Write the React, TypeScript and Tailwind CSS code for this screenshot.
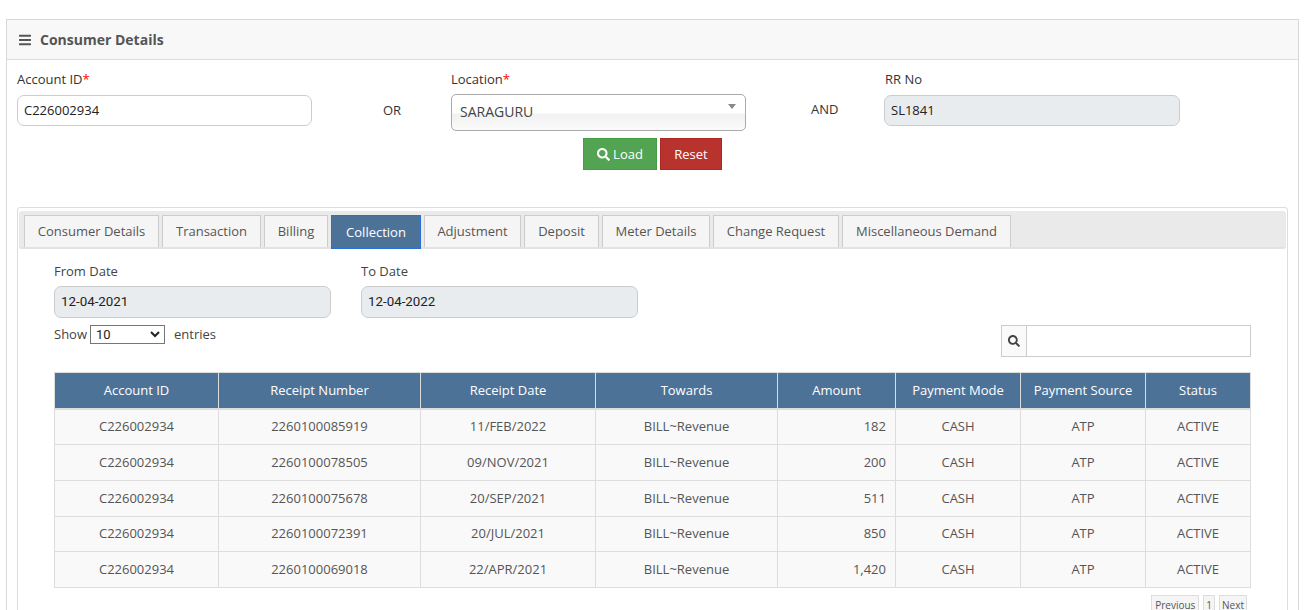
import React from 'react';
import { FaBars, FaSearch } from 'react-icons/fa';

const TABS = [
  { label: 'Consumer Details', width: 'w-[135px]' },
  { label: 'Transaction', width: 'w-[99px]' },
  { label: 'Billing', width: 'w-[64px]' },
  { label: 'Collection', width: 'w-[90px]', active: true },
  { label: 'Adjustment', width: 'w-[97px]' },
  { label: 'Deposit', width: 'w-[75px]' },
  { label: 'Meter Details', width: 'w-[108px]' },
  { label: 'Change Request', width: 'w-[126px]' },
  { label: 'Miscellaneous Demand', width: 'w-[169px]' },
];

const COLUMNS = [
  { label: 'Account ID', width: 'w-[164px]' },
  { label: 'Receipt Number', width: 'w-[202px]' },
  { label: 'Receipt Date', width: 'w-[175px]' },
  { label: 'Towards', width: 'w-[182px]' },
  { label: 'Amount', width: 'w-[118px]' },
  { label: 'Payment Mode', width: 'w-[125px]' },
  { label: 'Payment Source', width: 'w-[125px]' },
  { label: 'Status', width: 'w-[105px]' },
];

const ROWS = [
  { receipt: '2260100085919', date: '11/FEB/2022', amount: '182', h: 'h-[36px]' },
  { receipt: '2260100078505', date: '09/NOV/2021', amount: '200', h: 'h-[36px]' },
  { receipt: '2260100075678', date: '20/SEP/2021', amount: '511', h: 'h-[36px]' },
  { receipt: '2260100072391', date: '20/JUL/2021', amount: '850', h: 'h-[35px]' },
  { receipt: '2260100069018', date: '22/APR/2021', amount: '1,420', h: 'h-[36px]' },
];

const cell = 'border border-[#ddd] px-2 text-center font-normal';

export default function App() {
  return (
    <div className="h-[610px] overflow-hidden bg-white pt-[19px] pl-[6px] pr-[8px] font-['Open_Sans',sans-serif] text-[13px] text-[#333]">
      <div className="border border-[#d8d8d8]">
        {/* Panel header */}
        <div className="flex h-[40px] items-center gap-[9px] border-b border-[#ddd] bg-[#f8f8f8] pl-[12px]">
          <FaBars className="h-[14px] w-[12px] text-[#555]" />
          <span className="text-[14px] font-bold text-[#555]">Consumer Details</span>
        </div>

        {/* Search form */}
        <div className="flex h-[133px] pl-[10px] pt-[10px]">
          <div className="w-[295px]">
            <label className="block h-[25px] leading-[18px]">
              Account ID<span className="text-[#f00]">*</span>
            </label>
            <div className="flex h-[31px] items-center rounded-[7px] border border-[#ccc] pl-[6px] text-[#222]">
              C226002934
            </div>
          </div>
          <div className="w-[139px] pl-[71px] pt-[31px] leading-[18px]">OR</div>
          <div className="w-[295px]">
            <label className="block h-[24px] leading-[18px]">
              Location<span className="text-[#f00]">*</span>
            </label>
            <div className="relative flex h-[37px] items-center rounded-[5px] border border-[#aaa] bg-[linear-gradient(#fff_50%,#f1f1f1_56%,#fbfbfb)] pl-[8px] pb-[3px] text-[14px] text-[#444]">
              SARAGURU
              <span className="absolute right-[9px] top-[9px] border-x-[4px] border-t-[5px] border-x-transparent border-t-[#888]" />
            </div>
            <div className="mt-[7px] flex gap-[3px] pl-[132px]">
              <button className="flex h-[32px] w-[74px] items-center justify-center gap-[3px] border border-[#449d44] bg-[#52a452] pt-[1px] text-white">
                <FaSearch className="h-[13px] w-[13px]" />
                Load
              </button>
              <button className="h-[32px] w-[62px] border border-[#ac2925] bg-[#b9332e] pt-[1px] text-white">Reset</button>
            </div>
          </div>
          <div className="w-[138px] pl-[65px] pt-[30px] leading-[18px]">AND</div>
          <div className="w-[296px]">
            <label className="block h-[25px] pl-[1px] leading-[18px]">RR No</label>
            <div className="flex h-[31px] items-center rounded-[7px] border border-[#ccc] bg-[#e9ecef] pl-[6px] text-[#222]">
              SL1841
            </div>
          </div>
        </div>

        {/* Tabbed box */}
        <div className="mx-[10px] mt-[14px] h-[420px] rounded-[3px] border border-[#ddd] px-[1px] pt-[3px]">
          <div className="flex h-[38px] gap-[3px] rounded-[3px] border-b-[2px] border-[#e2e2e2] bg-[#eaeaea] pl-[5px] pt-[4px]">
            {TABS.map((tab) =>
              tab.active ? (
                <div
                  key={tab.label}
                  className={`flex h-[34px] items-center justify-center border border-[#2a6fd6] bg-[#4d7298] pt-[2px] text-white ${tab.width}`}
                >
                  {tab.label}
                </div>
              ) : (
                <div
                  key={tab.label}
                  className={`flex h-[32px] items-center justify-center border-x border-t border-[#ccc] bg-[#f5f5f5] text-[#555] ${tab.width}`}
                >
                  {tab.label}
                </div>
              ),
            )}
          </div>

          <div className="pl-[35px] pr-[35px]">
            {/* Dates */}
            <div className="mt-[13px] flex gap-[30px]">
              <div className="w-[277px]">
                <label className="block h-[24px] text-[#444] leading-[18px]">From Date</label>
                <div className="flex h-[32px] items-center rounded-[7px] border border-[#ccc] bg-[#e9ecef] pl-[6px] font-['Roboto',sans-serif] text-[13.33px] text-[#222]">
                  12-04-2021
                </div>
              </div>
              <div className="w-[277px]">
                <label className="block h-[24px] text-[#444] leading-[18px]">To Date</label>
                <div className="flex h-[32px] items-center rounded-[7px] border border-[#ccc] bg-[#e9ecef] pl-[6px] font-['Roboto',sans-serif] text-[13.33px] text-[#222]">
                  12-04-2022
                </div>
              </div>
            </div>

            {/* Table controls */}
            <div className="flex h-[54px] items-start justify-between">
              <div className="mt-[7px] flex items-center text-[#444]">
                <span>Show</span>
                <div className="ml-[3px] mr-[9px] flex h-[19px] w-[75px] items-center justify-between border border-[#767676] pl-[5px] pr-[4px] font-['Roboto',sans-serif] text-[#222]">
                  10
                  <svg width="10" height="7" viewBox="0 0 10 7" fill="none" stroke="#222" strokeWidth="2">
                    <path d="M1 1l4 4 4-4" />
                  </svg>
                </div>
                <span>entries</span>
              </div>
              <div className="mt-[7px] flex h-[32px] w-[250px] border border-[#ccc]">
                <div className="flex w-[25px] items-center justify-center border-r border-[#ccc] bg-[#fafafa]">
                  <FaSearch className="h-[12px] w-[12px] text-[#444]" />
                </div>
              </div>
            </div>

            {/* Collection table */}
            <table className="w-[1196px] table-fixed border-collapse">
              <thead>
                <tr className="h-[36px] bg-[#4d7298] text-white">
                  {COLUMNS.map((col) => (
                    <th key={col.label} className={`${cell} border-b-[2px] ${col.width}`}>
                      {col.label}
                    </th>
                  ))}
                </tr>
              </thead>
              <tbody className="text-[#555]">
                {ROWS.map((row) => (
                  <tr key={row.receipt} className={`bg-[#f9f9f9] ${row.h}`}>
                    <td className={cell}>C226002934</td>
                    <td className={cell}>{row.receipt}</td>
                    <td className={cell}>{row.date}</td>
                    <td className={cell}>BILL~Revenue</td>
                    <td className="border border-[#ddd] pr-[9px] text-right">{row.amount}</td>
                    <td className={cell}>CASH</td>
                    <td className={cell}>ATP</td>
                    <td className={cell}>ACTIVE</td>
                  </tr>
                ))}
              </tbody>
            </table>

            {/* Pagination */}
            <div className="mt-[7px] flex justify-end gap-[4px] pr-[4px] text-[10px] text-[#555]">
              <span className="border border-[#ddd] bg-[#f5f5f5] px-[3px] py-[2px]">Previous</span>
              <span className="border border-[#ddd] bg-[#f5f5f5] px-[2px] py-[2px]">1</span>
              <span className="border border-[#ddd] bg-[#f5f5f5] px-[2px] py-[2px]">Next</span>
            </div>
          </div>
        </div>
      </div>
    </div>
  );
}
